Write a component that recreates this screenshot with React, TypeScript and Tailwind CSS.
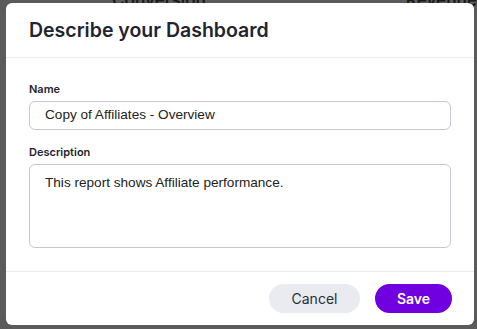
import React from "react";

const App = () => {
  return (
    <div className="relative w-[477px] h-[329px] overflow-hidden bg-[#5b5b5b]">
      {/* page behind the overlay */}
      <div className="absolute top-[-12px] left-0 w-full flex text-[#1a1a1a] text-[17px] font-semibold [font-family:Inter,sans-serif]">
        <span className="ml-[112px]">Conversion Rate</span>
        <span className="ml-[170px]">Revenue</span>
      </div>

      <div className="absolute left-[6px] top-[3px] w-[468px] h-[322px] bg-white rounded-md flex flex-col [font-family:Inter,sans-serif]">
        <div className="h-[55px] border-b border-[#ececf0] flex items-center px-[23px] pt-[1px]">
          <h2 className="text-[19.5px] font-semibold text-[#1f2430]">
            Describe your Dashboard
          </h2>
        </div>

        <div className="flex-1 px-[23px] pt-[24px]">
          <label className="block text-[11px] font-semibold text-[#1f2430] leading-[14px]">
            Name
          </label>
          <div className="mt-[5px] h-[29px] rounded-md border border-[#c5c8d3] flex items-center px-[15px] text-[13.6px] text-[#222] [font-family:'Liberation_Sans',Arial,sans-serif]">
            Copy of Affiliates - Overview
          </div>

          <label className="block mt-[15px] text-[11px] font-semibold text-[#1f2430] leading-[14px]">
            Description
          </label>
          <div className="mt-[5px] h-[84px] rounded-md border border-[#c5c8d3] px-[15px] pt-[8px] text-[13.6px] text-[#222] [font-family:'Liberation_Sans',Arial,sans-serif]">
            This report shows Affiliate performance.
          </div>
        </div>

        <div className="h-[54px] border-t border-[#ececf0] flex items-center justify-end gap-[15px] px-[22px] pb-[1px]">
          <button className="w-[91px] h-[29px] rounded-full bg-[#e9ebf0] text-[14px] text-[#2a2d36]">
            Cancel
          </button>
          <button className="w-[77px] h-[29px] rounded-full bg-[#7000e0] text-[14px] font-semibold text-white">
            Save
          </button>
        </div>
      </div>
    </div>
  );
};

export default App;
